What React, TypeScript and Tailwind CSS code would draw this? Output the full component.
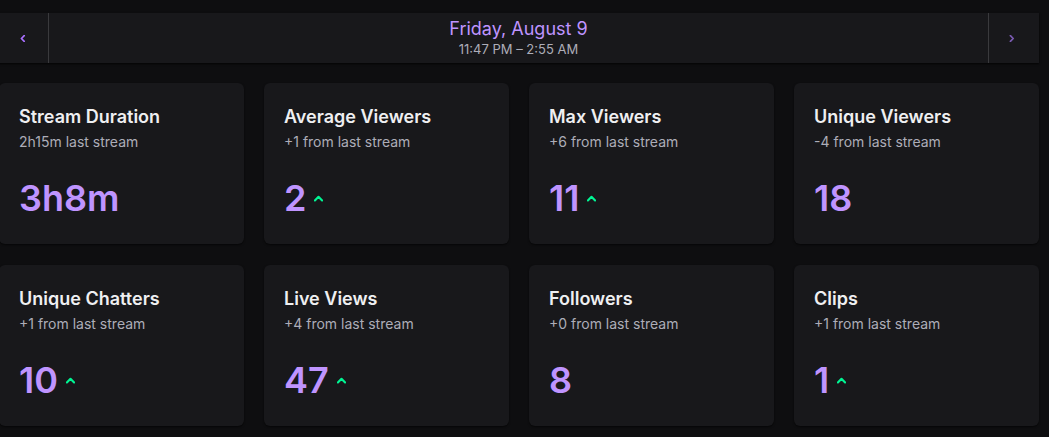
import React from "react";

type Stat = {
  title: string;
  sub: string;
  value: string;
  up?: boolean;
};

const stats: Stat[] = [
  { title: "Stream Duration", sub: "2h15m last stream", value: "3h8m" },
  { title: "Average Viewers", sub: "+1 from last stream", value: "2", up: true },
  { title: "Max Viewers", sub: "+6 from last stream", value: "11", up: true },
  { title: "Unique Viewers", sub: "-4 from last stream", value: "18" },
  { title: "Unique Chatters", sub: "+1 from last stream", value: "10", up: true },
  { title: "Live Views", sub: "+4 from last stream", value: "47", up: true },
  { title: "Followers", sub: "+0 from last stream", value: "8" },
  { title: "Clips", sub: "+1 from last stream", value: "1", up: true },
];

function Caret({ dir, className }: { dir: "left" | "right" | "up"; className: string }) {
  const d =
    dir === "left" ? "M6 1 L2 5 L6 9" : dir === "right" ? "M2 1 L6 5 L2 9" : "M1 6 L5 2 L9 6";
  return (
    <svg viewBox="0 0 10 10" className={className} fill="none" stroke="currentColor" strokeWidth="2.4" strokeLinecap="round" strokeLinejoin="round">
      <path d={d} />
    </svg>
  );
}

function StatCard({ stat }: { stat: Stat }) {
  return (
    <div className="bg-[#18181b] rounded-md px-5 pt-[22px] h-[161px] shadow-[0_1px_2px_rgba(0,0,0,0.6)]">
      <div className="text-[18px] leading-6 font-semibold text-[#efeff1]">{stat.title}</div>
      <div className="mt-[3px] text-sm leading-5 text-[#adadb8]">{stat.sub}</div>
      <div className="mt-[26px] flex items-center gap-2">
        <span className="text-[36px] leading-10 font-semibold text-[#bf94ff]">{stat.value}</span>
        {stat.up && <Caret dir="up" className="w-[9px] h-[9px] mt-[3px] text-[#00f593]" />}
      </div>
    </div>
  );
}

export default function App() {
  return (
    <div className="min-h-[437px] bg-[#0e0e10] pt-[13px] overflow-hidden" style={{ fontFamily: "Inter, 'Noto Sans', sans-serif" }}>
      <div className="ml-[-1px] w-[1040px]">
        {/* Date switcher */}
        <div className="flex h-[50px] bg-[#18181b] shadow-[0_1px_2px_rgba(0,0,0,0.8)]">
          <button className="w-[50px] flex items-center justify-center border-r border-[#3a3a3d]">
            <Caret dir="left" className="w-[7px] h-[7px] text-[#a970ff]" />
          </button>
          <div className="flex-1 flex flex-col items-center justify-center">
            <div className="text-[18px] leading-6 -mt-[2px] text-[#bf94ff]">Friday, August 9</div>
            <div className="text-[13px] leading-4 text-[#adadb8]">11:47 PM – 2:55 AM</div>
          </div>
          <button className="w-[51px] flex items-center justify-center border-l border-[#3a3a3d]">
            <Caret dir="right" className="w-[7px] h-[7px] mr-[3px] text-[#7b5bb3]" />
          </button>
        </div>

        {/* Stats */}
        <div className="grid grid-cols-4 gap-x-5 gap-y-[21px] mt-5">
          {stats.map((s) => (
            <StatCard key={s.title} stat={s} />
          ))}
        </div>
      </div>
    </div>
  );
}
